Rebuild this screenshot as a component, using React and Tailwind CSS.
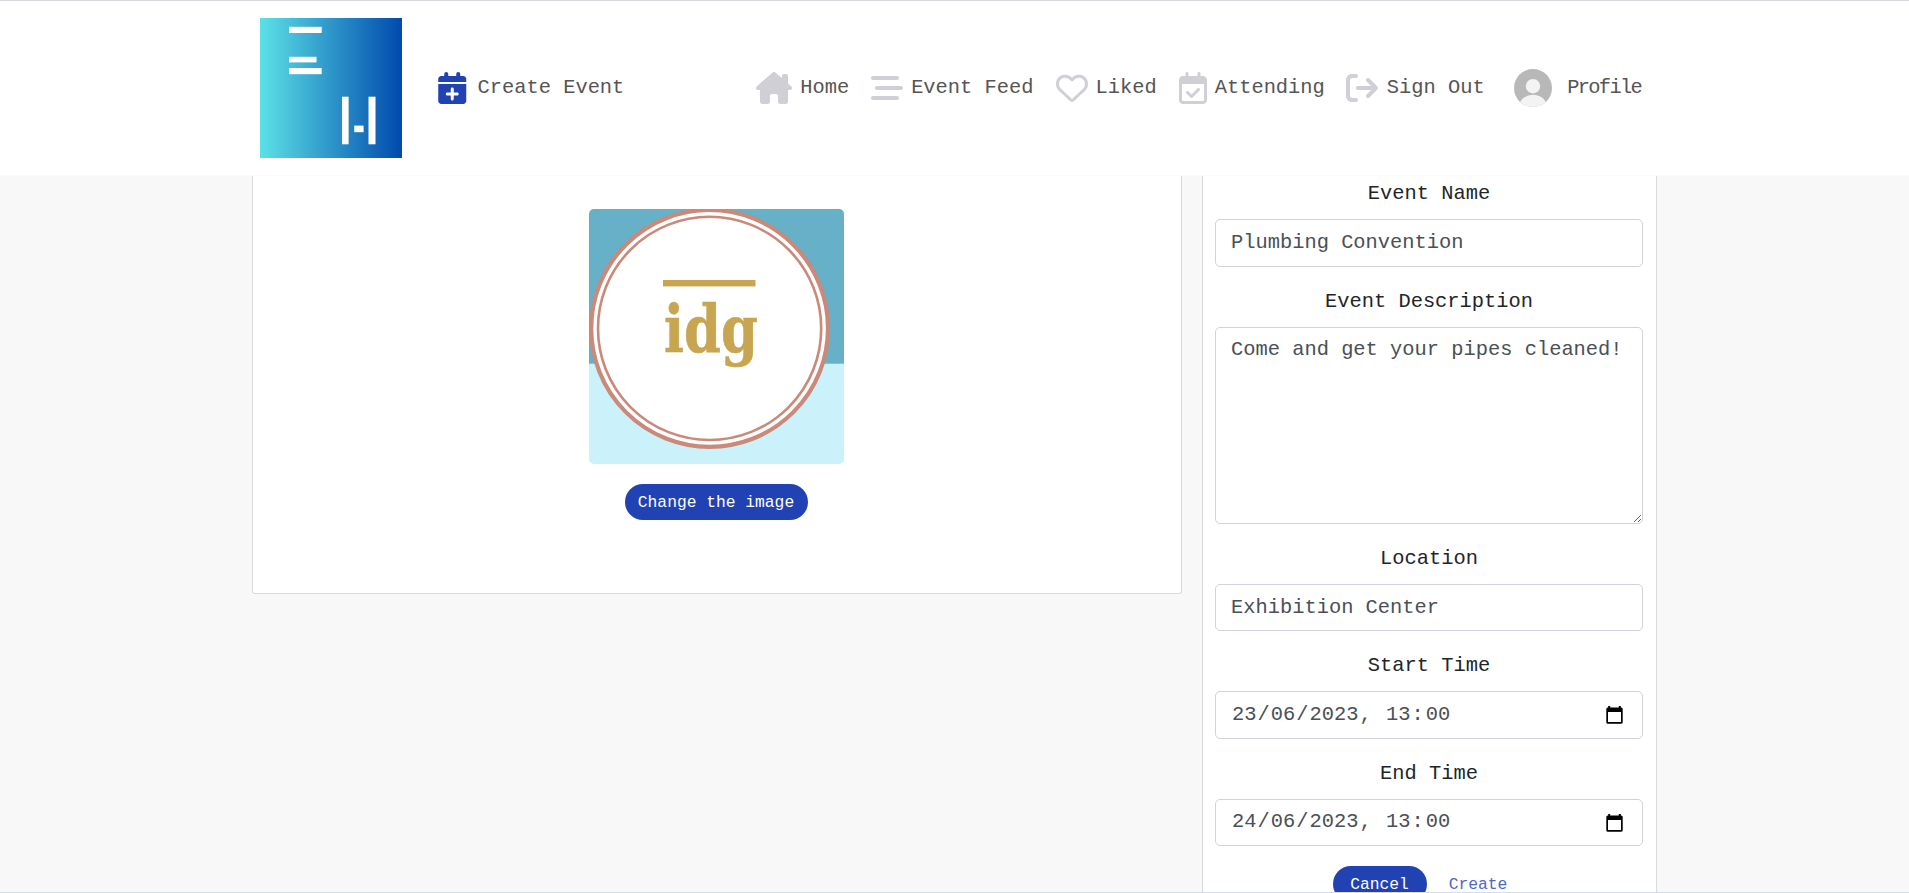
import React from "react";
import {
  FaHouseChimney,
  FaBarsStaggered,
  FaRegHeart,
  FaRegCalendarCheck,
  FaArrowRightFromBracket,
  FaCalendarPlus,
} from "react-icons/fa6";

function Logo() {
  return (
    <svg className="block h-[140px] w-[142px]" viewBox="0 0 142 140">
      <defs>
        <linearGradient id="logo" x1="0" x2="1" y1="0" y2="0">
          <stop offset="0" stopColor="#5ce1e6" />
          <stop offset="1" stopColor="#004aad" />
        </linearGradient>
      </defs>
      <rect width="142" height="140" fill="url(#logo)" />
      <g fill="#fff">
        <rect x="29" y="8.8" width="32.7" height="6.2" />
        <rect x="29" y="38.8" width="27.5" height="5.6" />
        <rect x="29" y="50" width="32.7" height="6.2" />
        <rect x="82" y="78.7" width="6.6" height="47.6" />
        <rect x="108.5" y="78.7" width="7" height="47.6" />
        <rect x="94.2" y="107.6" width="9.4" height="6.6" />
      </g>
    </svg>
  );
}

function Avatar() {
  return (
    <svg className="block size-[38px] shrink-0" viewBox="0 0 38 38">
      <clipPath id="avatar">
        <circle cx="19" cy="19" r="19" />
      </clipPath>
      <g clipPath="url(#avatar)">
        <rect width="38" height="38" fill="#b8b8b8" />
        <circle cx="19" cy="17.2" r="7.2" fill="#f3f3f3" />
        <ellipse cx="19" cy="38" rx="14" ry="12.3" fill="#f3f3f3" />
      </g>
    </svg>
  );
}

function EventImage() {
  return (
    <svg className="block size-[255px] rounded-[5px]" viewBox="0 0 255 255">
      <rect width="255" height="255" fill="#cbf1fa" />
      <rect width="255" height="154.7" fill="#66b1c7" />
      <circle cx="120.6" cy="119.4" r="118.4" fill="#fff" stroke="#ca8979" strokeWidth="4.2" />
      <circle cx="120.6" cy="119.4" r="111.6" fill="none" stroke="#ca8979" strokeWidth="2.6" />
      <rect x="74" y="71" width="92.5" height="6.4" fill="#c7a551" />
      <text
        x="75"
        y="142.5"
        textLength="94"
        lengthAdjust="spacingAndGlyphs"
        fill="#c7a551"
        stroke="#c7a551"
        strokeWidth="0.6"
        className="font-['DejaVu_Serif',serif] text-[65px] font-bold"
      >
        idg
      </text>
    </svg>
  );
}

function NavItem({ icon, label, className }) {
  return (
    <a className={"flex items-center " + className}>
      {icon}
      <span className="mt-px">{label}</span>
    </a>
  );
}

function Label({ children }) {
  return <label className="mt-[20px] mb-[10px] block h-[30px] text-center leading-[30px]">{children}</label>;
}

function TextField({ value }) {
  return (
    <input
      readOnly
      value={value}
      className="block h-[47.6px] w-full rounded-[5px] border border-[#ced4da] bg-white px-[15px] text-[#495057] outline-none"
    />
  );
}

function DateField({ day }) {
  return (
    <div className="flex h-[47.6px] w-full items-center rounded-[5px] border border-[#ced4da] bg-white pr-[19px] pl-[15px] text-[#495057]">
      <div className="flex whitespace-pre">
        <span className="px-px">{day}</span>/<span className="px-px">06</span>/
        <span className="px-px">2023</span>
        <span>{", "}</span>
        <span className="pr-px pl-[2px]">13</span>:<span className="pr-px pl-[2px]">00</span>
      </div>
      <svg className="ml-auto h-[18px] w-[17px]" viewBox="0 0 17 18">
        <path
          fill="#000"
          fillRule="evenodd"
          d="M2.2 0h2v1.5h8.6V0h2v1.5h.4A1.5 1.5 0 0 1 16.700 3v13.300a1.500 1.500 0 0 1-1.500 1.500H1.800A1.500 1.500 0 0 1 .3 16.300V3A1.500 1.500 0 0 1 1.800 1.500h.4zM2 6v10.100h13V6z"
        />
      </svg>
    </div>
  );
}

const gray = "text-[#d0cfd5] shrink-0";

export default function App() {
  return (
    <div className="flex h-[893px] w-full flex-col overflow-hidden border-b border-[#d5dcec] bg-[#f8f8f8] font-['Liberation_Mono',monospace] text-[20.4px] text-[#212529]">
      <header className="h-[176px] shrink-0 border-t border-b border-t-[#d6dade] border-b-[#f2fffd] bg-white">
        <div className="mx-auto flex h-full w-[1389px] items-center text-[#555]">
          <Logo />
          <NavItem
            className="ml-[36px] gap-[11px]"
            icon={<FaCalendarPlus className="h-[32px] w-[28.500px] shrink-0 text-[#2142b2]" />}
            label="Create Event"
          />
          <nav className="mr-[8px] ml-auto flex items-center">
            <NavItem className="gap-[8px]" icon={<FaHouseChimney className={"h-[32px] w-[36px] " + gray} />} label="Home" />
            <NavItem className="ml-[22px] gap-[8px]" icon={<FaBarsStaggered className={"size-[32px] " + gray} />} label="Event Feed" />
            <NavItem className="ml-[22px] gap-[8px]" icon={<FaRegHeart className={"size-[32px] " + gray} />} label="Liked" />
            <NavItem className="ml-[22px] gap-[8px]" icon={<FaRegCalendarCheck className={"h-[32px] w-[28px] " + gray} />} label="Attending" />
            <NavItem className="ml-[21.500px] gap-[8.500px]" icon={<FaArrowRightFromBracket className={"size-[32px] " + gray} />} label="Sign Out" />
            <NavItem className="ml-[29px] gap-[15.500px] tracking-[-1.7px]" icon={<Avatar />} label="Profile" />
          </nav>
        </div>
      </header>
      <main className="mx-auto flex h-[716px] w-[1405px] items-start justify-between">
        <section className="flex h-[418px] w-[930px] flex-col items-center rounded-b-[3px] border border-t-0 border-[#dbdbdb] bg-white pt-[33px] pr-[2px]">
          <EventImage />
          <button className="mt-[20px] h-[36px] w-[183px] rounded-full bg-[#2142b2] pt-[2px] text-[16.300px] text-white">
            Change the image
          </button>
        </section>
        <section className="h-[760px] w-[455px] border-x border-[#dbdbdb] bg-white pr-[13px] pl-[12px]">
          <div className="-mt-[17px]">
            <Label>Event Name</Label>
            <TextField value="Plumbing Convention" />
            <Label>Event Description</Label>
            <textarea
              readOnly
              value="Come and get your pipes cleaned!"
              className="block h-[197px] w-full rounded-[5px] border border-[#ced4da] bg-white py-[7px] pl-[15px] leading-[30px] text-[#495057] outline-none"
            />
            <Label>Location</Label>
            <TextField value="Exhibition Center" />
            <Label>Start Time</Label>
            <DateField day="23" />
            <Label>End Time</Label>
            <DateField day="24" />
            <div className="mt-[20px] flex justify-center pl-[3px] text-[16.300px]">
              <button className="h-[36px] w-[94px] rounded-full bg-[#2142b2] pt-px text-white">Cancel</button>
              <button className="h-[36px] w-[102px] pt-px pl-px text-[#4d68c8]">Create</button>
            </div>
          </div>
        </section>
      </main>
    </div>
  );
}
